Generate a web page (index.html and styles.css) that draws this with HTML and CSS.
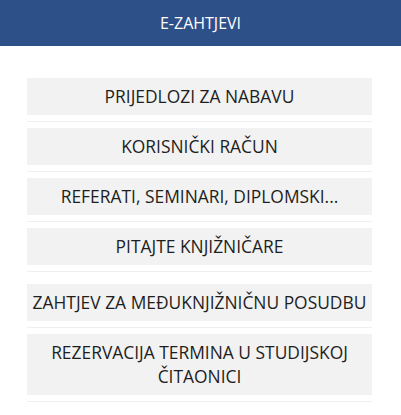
FILE: index.html
```html
<!DOCTYPE html>
<html lang="hr">
<head>
    <meta charset="UTF-8">
    <meta name="viewport" content="width=device-width, initial-scale=1.0">
    <title>E-zahtjevi</title>
    <link rel="stylesheet" href="styles.css">
</head>
<body>
    <div class="header">E-ZAHTJEVI</div>
    <div class="menu">
        <div class="item"><a href="#">PRIJEDLOZI ZA NABAVU</a></div>
        <div class="item"><a href="#">KORISNIČKI RAČUN</a></div>
        <div class="item"><a href="#">REFERATI, SEMINARI, DIPLOMSKI...</a></div>
        <div class="item"><a href="#">PITAJTE KNJIŽNIČARE</a></div>
        <div class="item item-spaced"><a href="#">ZAHTJEV ZA MEĐUKNJIŽNIČNU POSUDBU</a></div>
        <div class="item"><a href="#">REZERVACIJA TERMINA U STUDIJSKOJ ČITAONICI</a></div>
    </div>
</body>
</html>
```

FILE: styles.css
```css
body {
    margin: 0;
    font-family: "Open Sans", Arial, sans-serif;
    background-color: #fff;
    color: #222;
}
.header {
    height: 46px;
    line-height: 46px;
    background-color: #2e5089;
    color: #fff;
    text-align: center;
    font-size: 16px;
}
.menu {
    padding: 32px 29px 0 27px;
}
.item {
    padding-bottom: 6px;
    border-bottom: 1px solid #efefef;
    margin-bottom: 6px;
}
.item-spaced {
    margin-top: 12px;
}
.item a {
    display: block;
    background-color: #f2f2f2;
    color: #1e1e1e;
    text-decoration: none;
    text-align: center;
    font-size: 17.4px;
    line-height: 24px;
    padding: 6px 20px 7px;
}
.item-spaced a {
    padding: 6px 0 7px;
}
```
